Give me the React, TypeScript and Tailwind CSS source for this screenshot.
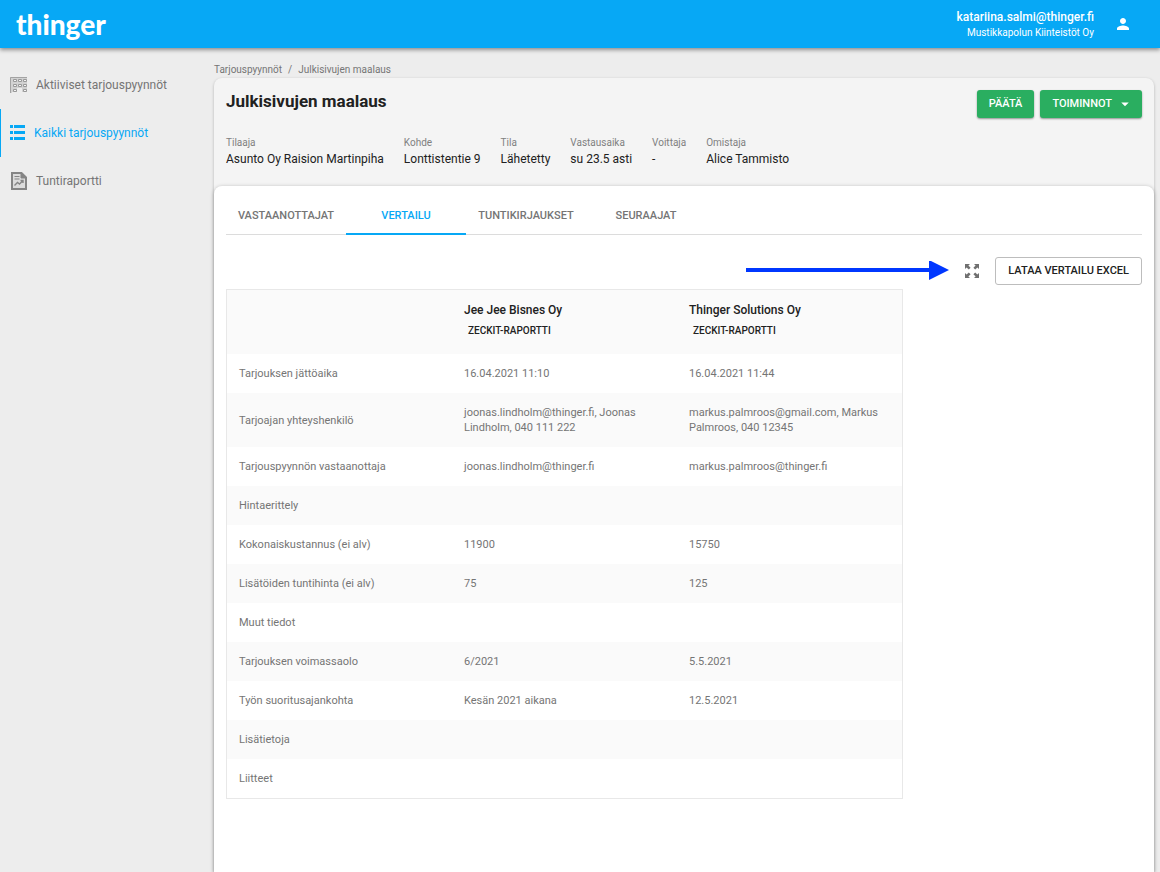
import type { ReactNode } from 'react'
import { MdArrowDropDown, MdPerson } from 'react-icons/md'

const details = [
  { label: 'Tilaaja', value: 'Asunto Oy Raision Martinpiha' },
  { label: 'Kohde', value: 'Lonttistentie 9' },
  { label: 'Tila', value: 'Lähetetty' },
  { label: 'Vastausaika', value: 'su 23.5 asti' },
  { label: 'Voittaja', value: '-' },
  { label: 'Omistaja', value: 'Alice Tammisto' },
]

const tabs = ['Vastaanottajat', 'Vertailu', 'Tuntikirjaukset', 'Seuraajat']

const companies = ['Jee Jee Bisnes Oy', 'Thinger Solutions Oy']

const rows = [
  ['Tarjouksen jättöaika', '16.04.2021 11:10', '16.04.2021 11:44'],
  [
    'Tarjoajan yhteyshenkilö',
    'joonas.lindholm@thinger.fi, Joonas Lindholm, 040 111 222',
    'markus.palmroos@gmail.com, Markus Palmroos, 040 12345',
  ],
  ['Tarjouspyynnön vastaanottaja', 'joonas.lindholm@thinger.fi', 'markus.palmroos@thinger.fi'],
  ['Hintaerittely', '', ''],
  ['Kokonaiskustannus (ei alv)', '11900', '15750'],
  ['Lisätöiden tuntihinta (ei alv)', '75', '125'],
  ['Muut tiedot', '', ''],
  ['Tarjouksen voimassaolo', '6/2021', '5.5.2021'],
  ['Työn suoritusajankohta', 'Kesän 2021 aikana', '12.5.2021'],
  ['Lisätietoja', '', ''],
  ['Liitteet', '', ''],
]

const BuildingIcon = () => (
  <svg className="h-4 w-[18px]" viewBox="0 0 18 16" fill="none" aria-hidden="true">
    <path d="M0 0h17v15h-5v-4H7v4H2v1H0z" fill="#d2d2d2" />
    <path d="M0.5 16V0.5H17" stroke="#a3a3a3" />
    <path
      d="M3.5 2.5h3v2h-3zM8.5 2.5h3v2h-3zM13.5 2.5h3v2h-3zM3.5 7.5h3v2h-3zM8.5 7.5h3v2h-3zM13.5 7.5h3v2h-3zM3.5 12.5h3v2h-3zM13.5 12.5h3v2h-3z"
      fill="#f4f4f4"
      stroke="#999999"
    />
  </svg>
)

const ListIcon = () => (
  <svg className="size-4" viewBox="0 0 16 16" fill="currentColor" aria-hidden="true">
    <path d="M0 0h3v3H0zM4 0h11v3H4zM0 6h3v3H0zM4 6h11v3H4zM0 12h3v3H0zM4 12h11v3H4z" />
  </svg>
)

const ReportIcon = () => (
  <svg className="size-[18px]" viewBox="-1 0 18 18" fill="none" stroke="#858585" aria-hidden="true">
    <path d="M1 1h9.5L15 5.5V17H1z" fill="#dcdcdc" strokeWidth="2" />
    <path d="M10 1v5h5z" fill="#858585" />
    <path d="M3.5 4.5h5M3.5 7h5" />
    <path d="M3.5 13.5l3-3 2 1.5 3.5-3.5M9.5 8.5H12V11" strokeWidth="1.4" />
  </svg>
)

const ExpandIcon = () => (
  <svg className="size-4" viewBox="0 0 16 16" fill="currentColor" aria-hidden="true">
    <path d="M1 1h5L4.4 2.6 6.6 4.8 4.8 6.6 2.6 4.4 1 6z" />
    <path d="M15 1v5l-1.6-1.6-2.2 2.2-1.8-1.8 2.2-2.2L10 1z" />
    <path d="M1 15v-5l1.6 1.6 2.2-2.2 1.8 1.8-2.2 2.2L6 15z" />
    <path d="M15 15h-5l1.6-1.6-2.2-2.2 1.8-1.8 2.2 2.2L15 10z" />
  </svg>
)

const NavItem = ({ icon, label, active }: { icon: ReactNode; label: string; active?: boolean }) => (
  <a
    href="#"
    aria-current={active ? 'page' : undefined}
    className={`flex h-12 items-center gap-2 border-l pl-[9px] text-xs ${
      active ? 'border-[#07a8f5] text-[#07a8f5]' : 'border-transparent text-[#757575]'
    }`}
  >
    {icon}
    <span>{label}</span>
  </a>
)

const Header = () => (
  <header className="z-10 flex h-12 items-center justify-between bg-[#07a8f5] pr-7 pl-4 text-white shadow-[0_2px_4px_rgba(0,0,0,0.4)]">
    <a href="#" className="font-['Lato',sans-serif] text-[28px] leading-8 font-black">thinger</a>
    <div className="flex items-center gap-5">
      <div className="pt-[2px] text-right">
        <p className="text-xs leading-4 font-medium">katariina.salmi@thinger.fi</p>
        <p className="text-[10px] leading-4">Mustikkapolun Kiinteistöt Oy</p>
      </div>
      <button type="button" aria-label="Käyttäjä">
        <MdPerson className="size-[18px]" />
      </button>
    </div>
  </header>
)

const Sidebar = () => (
  <nav className="w-[214px] shrink-0 pt-[13px]">
    <NavItem icon={<BuildingIcon />} label="Aktiiviset tarjouspyynnöt" />
    <NavItem icon={<ListIcon />} label="Kaikki tarjouspyynnöt" active />
    <NavItem icon={<ReportIcon />} label="Tuntiraportti" />
  </nav>
)

const RequestSummary = () => (
  <section className="px-3 pt-3 pb-[19px]">
    <div className="flex items-start justify-between">
      <h1 className="text-[17px] leading-[22px] font-bold">Julkisivujen maalaus</h1>
      <div className="flex gap-[6px] text-[11px] font-medium text-white">
        <button type="button" className="h-7 rounded-[3px] bg-[#2aae60] px-3 uppercase shadow-[0_1px_2px_rgba(0,0,0,0.4)]">
          Päätä
        </button>
        <button
          type="button"
          className="flex h-7 items-center gap-1 rounded-[3px] bg-[#2aae60] pr-2 pl-3 uppercase shadow-[0_1px_2px_rgba(0,0,0,0.4)]"
        >
          Toiminnot
          <MdArrowDropDown className="size-[18px]" />
        </button>
      </div>
    </div>
    <dl className="mt-[17px] flex gap-5">
      {details.map(({ label, value }) => (
        <div key={label}>
          <dt className="text-[10px] leading-4 text-[#808080]">{label}</dt>
          <dd className="text-xs leading-4">{value}</dd>
        </div>
      ))}
    </dl>
  </section>
)

const Tabs = () => (
  <div role="tablist" className="flex border-b border-[#dcdcdc]">
    {tabs.map((tab) => {
      const selected = tab === 'Vertailu'
      return (
        <button
          key={tab}
          type="button"
          role="tab"
          aria-selected={selected}
          className={`-mb-px h-9 min-w-[120px] border-b-2 text-[11px] font-medium uppercase ${
            selected ? 'border-[#07a8f5] text-[#07a8f5]' : 'border-transparent text-[#757575]'
          }`}
        >
          {tab}
        </button>
      )
    })}
  </div>
)

const Toolbar = () => (
  <div className="mt-[22px] mb-1 flex items-center justify-end gap-[15px]">
    <svg className="h-5 w-[203px]" viewBox="0 0 203 20" fill="#0037ff" aria-hidden="true">
      <path d="M0 7h183V-1l20 10-20 10v-8H0z" />
    </svg>
    <button type="button" aria-label="Koko näyttö" className="text-[#707070]">
      <ExpandIcon />
    </button>
    <button type="button" className="h-7 rounded-[3px] border border-[#bdbdbd] px-3 text-[11px] font-medium uppercase">
      Lataa vertailu Excel
    </button>
  </div>
)

const ComparisonTable = () => (
  <table className="w-[677px] max-w-full table-fixed border-separate border-spacing-0 border border-[#e8e8e8] text-left text-[11px] leading-[15px]">
    <thead>
      <tr className="h-16 bg-[#fafafa] align-top">
        <td />
        {companies.map((company) => (
          <th key={company} scope="col" className="px-3 pt-3 font-normal">
            <p className="text-xs leading-4 font-medium">{company}</p>
            <button type="button" className="mt-[5px] px-1 text-[10px] leading-4 font-medium uppercase">
              Zeckit-raportti
            </button>
          </th>
        ))}
      </tr>
    </thead>
    <tbody className="text-[#757575]">
      {rows.map(([label, first, second]) => (
        <tr key={label} className="even:bg-[#fafafa]">
          <th scope="row" className="px-3 py-3 font-normal">{label}</th>
          <td className="px-3 py-3">{first}</td>
          <td className="px-3 py-3">{second}</td>
        </tr>
      ))}
    </tbody>
  </table>
)

const App = () => {
  return (
    <div className="flex min-h-screen flex-col bg-[#ededed] font-['Roboto',sans-serif] text-[#212121]">
      <Header />
      <div className="flex flex-1">
        <Sidebar />
        <main className="flex min-w-0 flex-1 flex-col pt-[14px] pr-[6px]">
          <nav aria-label="Murupolku" className="flex gap-[6px] text-[10px] leading-4 text-[#757575]">
            <a href="#">Tarjouspyynnöt</a>
            <span>/</span>
            <span>Julkisivujen maalaus</span>
          </nav>
          <div className="flex flex-1 flex-col rounded-t-lg bg-[#f4f4f4] shadow-[0_1px_3px_rgba(0,0,0,0.25)]">
            <RequestSummary />
            <section className="flex-1 rounded-t-lg bg-white px-3 pt-[13px] pb-6 shadow-[0_1px_4px_rgba(0,0,0,0.3)]">
              <Tabs />
              <Toolbar />
              <ComparisonTable />
            </section>
          </div>
        </main>
      </div>
    </div>
  )
}

export default App
